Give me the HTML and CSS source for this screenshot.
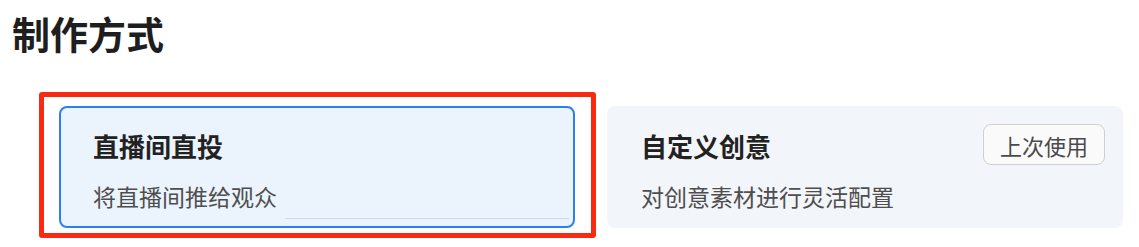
FILE: index.html
```html
<!DOCTYPE html>
<html lang="zh-CN">
<head>
<meta charset="utf-8">
<title>制作方式</title>
<link rel="stylesheet" href="styles.css">
</head>
<body>
<div class="page">
  <h1 class="heading">制作方式</h1>
  <div class="cards">
    <div class="card card-active">
      <div class="card-head">
        <div class="card-title">直播间直投</div>
      </div>
      <div class="card-desc">将直播间推给观众</div>
      <div class="card-rule"></div>
    </div>
    <div class="card card-idle">
      <div class="card-head">
        <div class="card-title">自定义创意</div>
        <span class="badge">上次使用</span>
      </div>
      <div class="card-desc">对创意素材进行灵活配置</div>
    </div>
  </div>
  <div class="highlight"></div>
</div>
</body>
</html>
```

FILE: styles.css
```css
* { box-sizing: border-box; }
html, body {
  margin: 0;
  padding: 0;
  background: #ffffff;
}
body {
  font-family: "Noto Sans CJK SC", "Noto Sans", sans-serif;
  color: #1f1f1f;
}
.page {
  position: relative;
  width: 1139px;
  height: 247px;
  padding: 12px 0 0 12px;
}
.heading {
  margin: 0;
  font-size: 38px;
  line-height: 41px;
  font-weight: 700;
  color: #1e1e1e;
}
.cards {
  display: flex;
  gap: 32px;
  margin-top: 53px;
  margin-left: 47px;
}
.card {
  width: 516px;
  height: 122px;
  border-radius: 8px;
  padding: 16px 16px 0 32px;
  display: flex;
  flex-direction: column;
}
.card-active {
  background: #ebf3fd;
  border: 2px solid #2b7ff4;
}
.card-idle {
  background: #f2f5f9;
  border: 2px solid #f2f5f9;
}
.card-head {
  display: flex;
  align-items: center;
  justify-content: space-between;
  min-height: 41px;
}
.card-title {
  font-size: 26px;
  line-height: 30px;
  font-weight: 700;
  color: #222222;
  padding-top: 3px;
}
.card-desc {
  margin-top: 19px;
  font-size: 23px;
  line-height: 25px;
  color: #4e4e4e;
}
.card-rule {
  align-self: flex-end;
  width: 284px;
  height: 1px;
  margin-top: 9px;
  margin-right: -12px;
  background: #c9dcf6;
}
.badge {
  display: inline-flex;
  align-items: center;
  justify-content: center;
  width: 122px;
  height: 41px;
  border: 1.5px solid #cfcfcf;
  border-radius: 8px;
  background: #fafafa;
  font-size: 22px;
  color: #4a4a4a;
}
.highlight {
  position: absolute;
  left: 39px;
  top: 92px;
  width: 557px;
  height: 146px;
  border: 5px solid #fa2a12;
  border-radius: 3px;
  pointer-events: none;
}
```
